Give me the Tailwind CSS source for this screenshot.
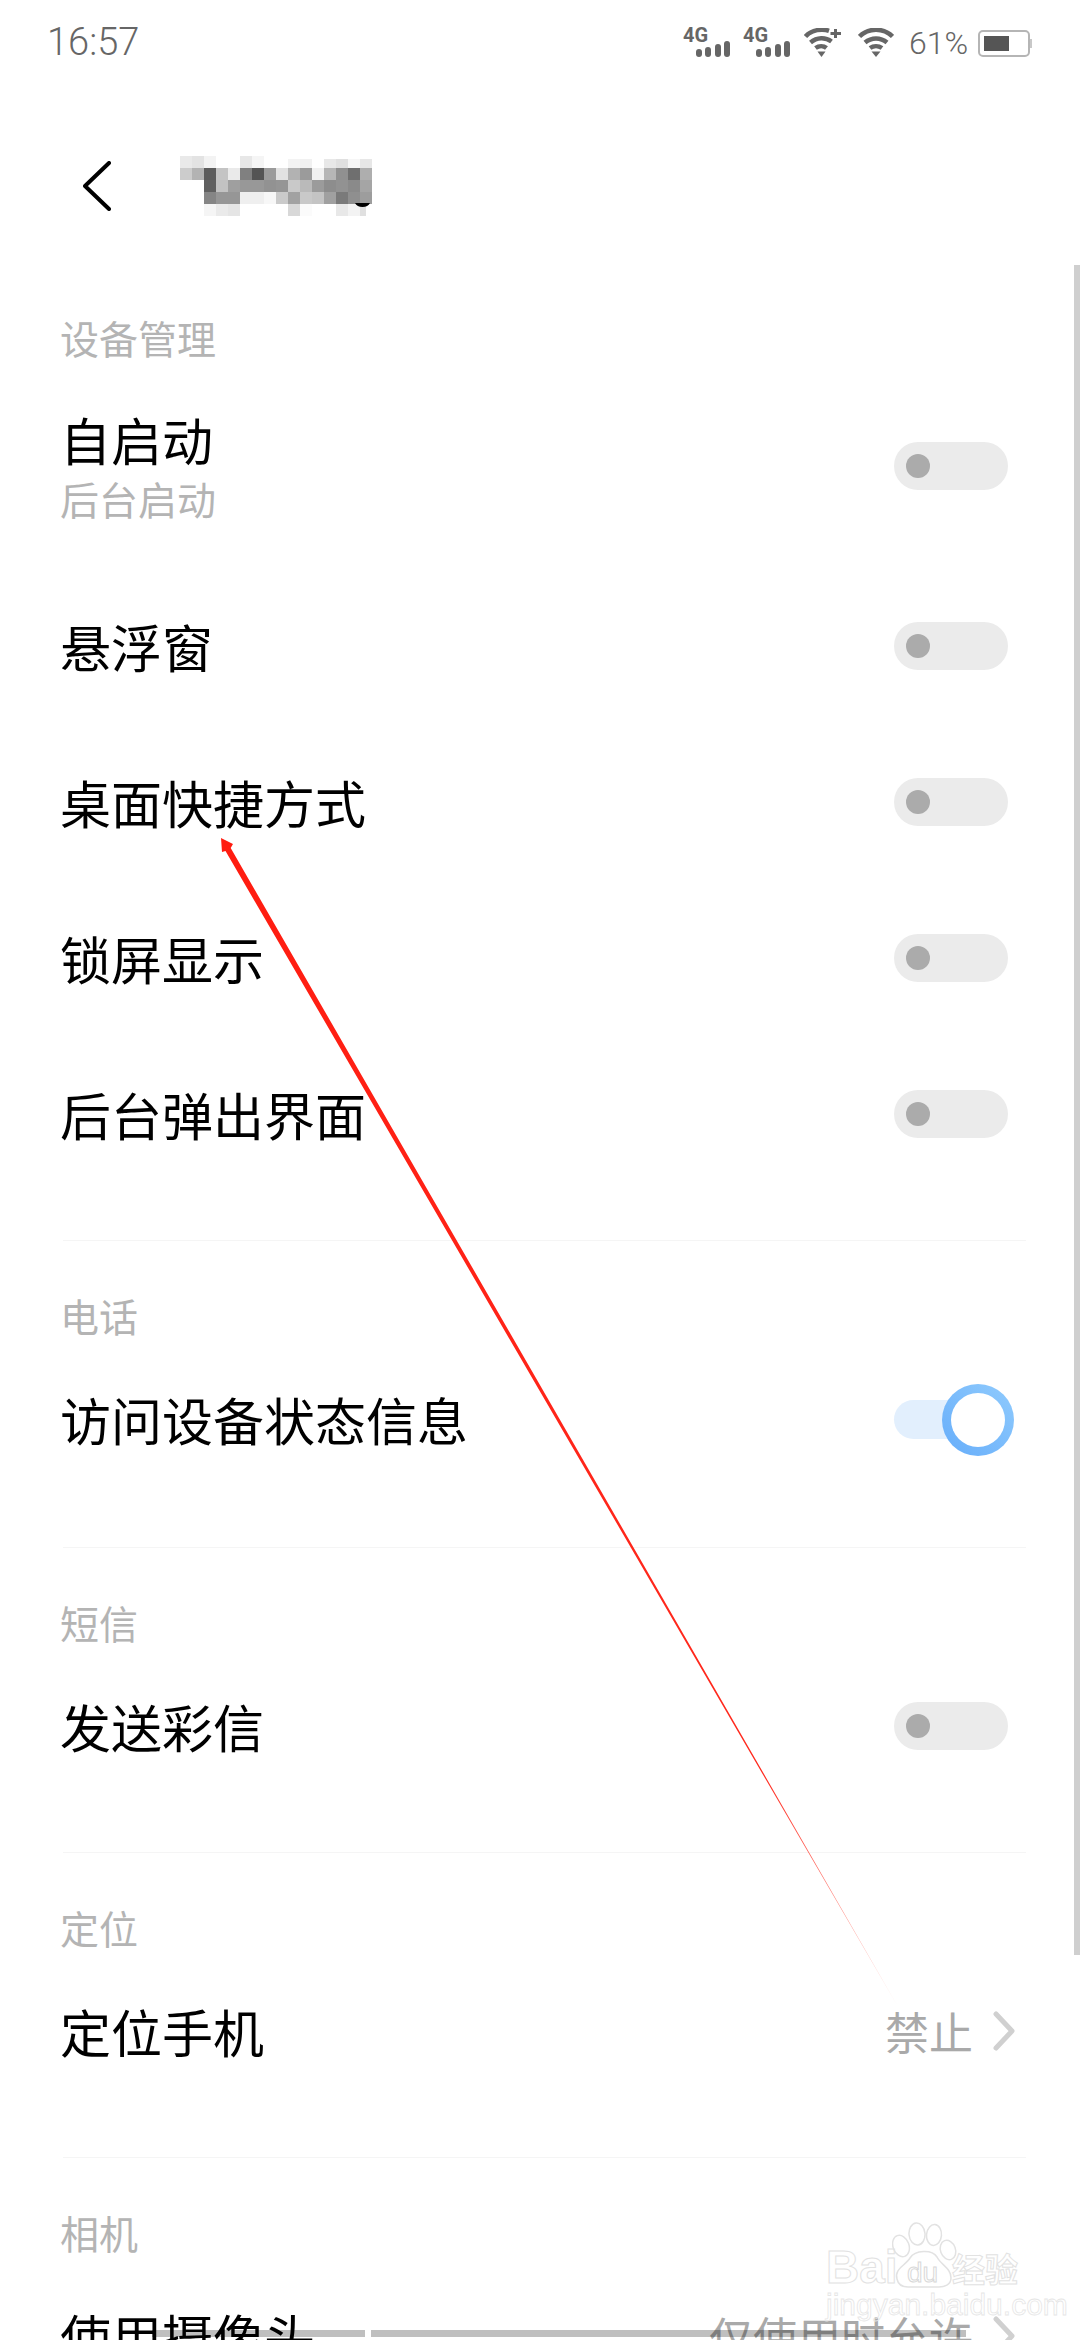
<!DOCTYPE html>
<html lang="zh-CN">
<head>
  <meta charset="UTF-8">
  <meta name="viewport" content="width=device-width, initial-scale=1.0">
  <title>权限管理</title>
  <script src="https://cdn.jsdelivr.net/npm/@tailwindcss/browser@4"></script>
</head>
<body class="bg-white">
  <div class="relative w-[1080px] h-[2340px] overflow-hidden bg-white text-black font-['Noto_Sans_CJK_SC','Noto_Sans',sans-serif]">

    <!-- status bar -->
    <div class="flex items-start justify-between h-[84px] pl-[47px] pr-[48px] pt-[18px] text-[#666666]">
      <span class="text-[38px] leading-[48px] font-light font-['Roboto',sans-serif]">16:57</span>
      <div class="flex items-start pt-[10px]">
        <svg class="w-[48px] h-[30px] overflow-visible" viewBox="0 0 48 30" fill="#666666">
          <text x="-1" y="13.5" font-family="Roboto, sans-serif" font-weight="700" font-size="20">4G</text>
          <rect x="12" y="21" width="6" height="8" rx="3"/><rect x="21" y="19" width="6" height="10" rx="3"/><rect x="31" y="16" width="6" height="13" rx="3"/><rect x="40" y="13" width="6" height="16" rx="3"/>
        </svg>
        <svg class="w-[48px] h-[30px] ml-[12px] overflow-visible" viewBox="0 0 48 30" fill="#666666">
          <text x="-1" y="13.5" font-family="Roboto, sans-serif" font-weight="700" font-size="20">4G</text>
          <rect x="12" y="21" width="6" height="8" rx="3"/><rect x="21" y="19" width="6" height="10" rx="3"/><rect x="31" y="16" width="6" height="13" rx="3"/><rect x="40" y="13" width="6" height="16" rx="3"/>
        </svg>
        <svg class="w-[38px] h-[30px] ml-[12px]" viewBox="0 0 38 30" fill="none" stroke="#666666" stroke-width="4.5">
          <path d="M1.5 8.5C6 3.5 12 1.800 18 1.800c2.500 0 5 .3 7 1"/>
          <path d="M6.500 14.500c6.500-5.500 15-5.500 21-1"/>
          <path d="M11.500 20c3.500-2.500 8-2.500 11 0"/>
          <path d="M13.500 23.500h8L17.500 29z" fill="#666666" stroke="none"/>
          <path d="M31.500 1v9M26.500 5.500h10.500" stroke-width="3"/>
        </svg>
        <svg class="w-[36px] h-[30px] ml-[16px]" viewBox="0 0 36 30" fill="none" stroke="#666666" stroke-width="4.5">
          <path d="M1.500 8.500C10.500 -0.500 25.500 -0.500 34.500 8.500"/>
          <path d="M7 14.500c6.500-5.500 15.500-5.500 22 0"/>
          <path d="M12 20c3.500-2.500 8.500-2.500 12 0"/>
          <path d="M13.500 23.500h9L18 29z" fill="#666666" stroke="none"/>
        </svg>
        <span class="ml-[15px] mt-[-3px] w-[60px] text-[32px] leading-[36px] font-light font-['Roboto',sans-serif]">61%</span>
        <div class="ml-[9px] flex items-center">
          <div class="w-[52px] h-[27px] mt-[2px] p-[4px] rounded-[5px] border-[2px] border-[#b5b5b5]">
            <div class="w-[25px] h-full bg-[#555555]"></div>
          </div>
          <div class="w-[2px] h-[9px] mt-[2px] bg-[#c8c8c8]"></div>
        </div>
      </div>
    </div>

    <!-- header -->
    <div class="flex items-center h-[204px] pl-[83px]">
      <svg class="w-[28px] h-[50px]" viewBox="0 0 28 50" fill="none" stroke="#000000" stroke-width="4" stroke-linecap="round" stroke-linejoin="round">
        <path d="M26 2 2 25l24 23" />
      </svg>
      <!-- pixelated title -->
      <svg class="ml-[69px] w-[192px] h-[60px]" viewBox="0 0 192 60" shape-rendering="crispEdges">
        <g>
          <rect x="0" y="0" width="12" height="12" fill="#e9e9e9"/><rect x="12" y="0" width="12" height="12" fill="#e3e3e3"/><rect x="24" y="0" width="12" height="12" fill="#f3f3f3"/><rect x="60" y="0" width="12" height="12" fill="#e7e7e7"/><rect x="72" y="0" width="12" height="12" fill="#f5f5f5"/><rect x="108" y="3" width="12" height="9" fill="#f3f3f3"/><rect x="120" y="3" width="12" height="9" fill="#f1f1f1"/><rect x="144" y="3" width="12" height="9" fill="#e8e8e8"/><rect x="156" y="3" width="12" height="9" fill="#e0e0e0"/><rect x="168" y="3" width="12" height="9" fill="#f6f6f6"/><rect x="180" y="3" width="12" height="9" fill="#e7e7e7"/>
          <rect x="0" y="12" width="12" height="12" fill="#cccccc"/><rect x="12" y="12" width="12" height="12" fill="#b3b3b3"/><rect x="24" y="12" width="12" height="12" fill="#5c5c5c"/><rect x="36" y="12" width="12" height="12" fill="#c4c4c4"/><rect x="48" y="12" width="12" height="12" fill="#eaeaea"/><rect x="60" y="12" width="12" height="12" fill="#808080"/><rect x="72" y="12" width="12" height="12" fill="#545454"/><rect x="84" y="12" width="12" height="12" fill="#9b9b9b"/><rect x="96" y="12" width="12" height="12" fill="#e2e2e2"/><rect x="108" y="12" width="12" height="12" fill="#b2b2b2"/><rect x="120" y="12" width="12" height="12" fill="#9b9b9b"/><rect x="132" y="12" width="12" height="12" fill="#f1f1f1"/><rect x="144" y="12" width="12" height="12" fill="#b6b6b6"/><rect x="156" y="12" width="12" height="12" fill="#909090"/><rect x="168" y="12" width="12" height="12" fill="#6f6f6f"/><rect x="180" y="12" width="12" height="12" fill="#aeaeae"/>
          <rect x="24" y="24" width="12" height="12" fill="#606060"/><rect x="36" y="24" width="12" height="12" fill="#c2c2c2"/><rect x="48" y="24" width="12" height="12" fill="#9f9f9f"/><rect x="60" y="24" width="12" height="12" fill="#989898"/><rect x="72" y="24" width="12" height="12" fill="#989898"/><rect x="84" y="24" width="12" height="12" fill="#929292"/><rect x="96" y="24" width="12" height="12" fill="#959595"/><rect x="108" y="24" width="12" height="12" fill="#c9c9c9"/><rect x="120" y="24" width="12" height="12" fill="#bababa"/><rect x="132" y="24" width="12" height="12" fill="#9b9b9b"/><rect x="144" y="24" width="12" height="12" fill="#8d8d8d"/><rect x="156" y="24" width="12" height="12" fill="#929292"/><rect x="168" y="24" width="12" height="12" fill="#8a8a8a"/><rect x="180" y="24" width="12" height="12" fill="#a5a5a5"/>
          <rect x="24" y="36" width="12" height="12" fill="#858585"/><rect x="36" y="36" width="12" height="12" fill="#969696"/><rect x="48" y="36" width="12" height="12" fill="#969696"/><rect x="60" y="36" width="12" height="12" fill="#efefef"/><rect x="72" y="36" width="12" height="12" fill="#efefef"/><rect x="84" y="36" width="12" height="12" fill="#f7f7f7"/><rect x="96" y="36" width="12" height="12" fill="#cacaca"/><rect x="108" y="36" width="12" height="12" fill="#a2a2a2"/><rect x="120" y="36" width="12" height="12" fill="#c9c9c9"/><rect x="132" y="36" width="12" height="12" fill="#c4c4c4"/><rect x="144" y="36" width="12" height="12" fill="#a0a0a0"/><rect x="156" y="36" width="12" height="12" fill="#7a7a7a"/><rect x="168" y="36" width="12" height="12" fill="#8f8f8f"/><rect x="180" y="36" width="12" height="12" fill="#9d9d9d"/>
          <rect x="24" y="48" width="12" height="12" fill="#f5f5f5"/><rect x="36" y="48" width="12" height="12" fill="#eaeaea"/><rect x="48" y="48" width="12" height="12" fill="#e5e5e5"/><rect x="108" y="48" width="12" height="12" fill="#d8d8d8"/><rect x="120" y="48" width="12" height="12" fill="#fbfbfb"/><rect x="156" y="48" width="12" height="12" fill="#e8e8e8"/><rect x="168" y="48" width="12" height="12" fill="#f3f3f3"/><rect x="180" y="48" width="6" height="12" fill="#e0e0e0"/>
        </g>
        <path d="M175 47h15q-2 4-7.500 4T175 47z" fill="#000000" shape-rendering="auto"/>
      </svg>
    </div>

    <!-- 设备管理 -->
    <section class="ml-[60px] mr-[54px]">
      <p class="h-[104px] pt-[21px] text-[39px] leading-[56px] text-[#b4b4b4]">设备管理</p>
      <div class="flex items-start justify-between h-[176px]">
        <div class="pt-[17px]">
          <p class="text-[51px] leading-[60px]">自启动</p>
          <p class="text-[39px] leading-[58px] text-[#b4b4b4]">后台启动</p>
        </div>
        <div class="mt-[50px] mr-[18px] flex items-center w-[114px] h-[48px] pl-[12px] rounded-full bg-[#ebebeb]">
          <div class="w-[24px] h-[24px] rounded-full bg-[#ababab]"></div>
        </div>
      </div>
      <div class="flex items-center justify-between h-[156px]">
        <p class="text-[51px] leading-[60px]">悬浮窗</p>
        <div class="mr-[18px] flex items-center w-[114px] h-[48px] pl-[12px] rounded-full bg-[#ebebeb]">
          <div class="w-[24px] h-[24px] rounded-full bg-[#ababab]"></div>
        </div>
      </div>
      <div class="flex items-center justify-between h-[156px]">
        <p class="text-[51px] leading-[60px]">桌面快捷方式</p>
        <div class="mr-[18px] flex items-center w-[114px] h-[48px] pl-[12px] rounded-full bg-[#ebebeb]">
          <div class="w-[24px] h-[24px] rounded-full bg-[#ababab]"></div>
        </div>
      </div>
      <div class="flex items-center justify-between h-[156px]">
        <p class="text-[51px] leading-[60px]">锁屏显示</p>
        <div class="mr-[18px] flex items-center w-[114px] h-[48px] pl-[12px] rounded-full bg-[#ebebeb]">
          <div class="w-[24px] h-[24px] rounded-full bg-[#ababab]"></div>
        </div>
      </div>
      <div class="flex items-center justify-between h-[156px]">
        <p class="text-[51px] leading-[60px]">后台弹出界面</p>
        <div class="mr-[18px] flex items-center w-[114px] h-[48px] pl-[12px] rounded-full bg-[#ebebeb]">
          <div class="w-[24px] h-[24px] rounded-full bg-[#ababab]"></div>
        </div>
      </div>
    </section>

    <!-- 电话 -->
    <section class="ml-[60px] mr-[54px] mt-[48px] pb-[50px]">
      <div class="ml-[3px] h-px bg-[#f5f5f5]"></div>
      <p class="h-[100px] pt-[46px] text-[39px] leading-[56px] text-[#b4b4b4]">电话</p>
      <div class="flex items-center justify-between h-[156px]">
        <p class="text-[51px] leading-[60px]">访问设备状态信息</p>
        <div class="relative mr-[18px] w-[114px] h-[39px] rounded-full bg-[#e2effd]">
          <div class="absolute right-[-6px] top-[-16px] flex items-center justify-center w-[72px] h-[72px] rounded-full bg-linear-to-bl from-[#90cbfd] to-[#66adfa]">
            <div class="w-[54px] h-[54px] rounded-full bg-white"></div>
          </div>
        </div>
      </div>
    </section>

    <!-- 短信 -->
    <section class="ml-[60px] mr-[54px] pb-[48px]">
      <div class="ml-[3px] h-px bg-[#f5f5f5]"></div>
      <p class="h-[100px] pt-[46px] text-[39px] leading-[56px] text-[#b4b4b4]">短信</p>
      <div class="flex items-center justify-between h-[156px]">
        <p class="text-[51px] leading-[60px]">发送彩信</p>
        <div class="mr-[18px] flex items-center w-[114px] h-[48px] pl-[12px] rounded-full bg-[#ebebeb]">
          <div class="w-[24px] h-[24px] rounded-full bg-[#ababab]"></div>
        </div>
      </div>
    </section>

    <!-- 定位 -->
    <section class="ml-[60px] mr-[54px] pb-[48px]">
      <div class="ml-[3px] h-px bg-[#f5f5f5]"></div>
      <p class="h-[100px] pt-[46px] text-[39px] leading-[56px] text-[#b4b4b4]">定位</p>
      <div class="flex items-center justify-between h-[156px]">
        <p class="text-[51px] leading-[60px]">定位手机</p>
        <div class="flex items-center mr-[11px]">
          <span class="text-[44px] leading-[60px] text-[#a9a9a9]">禁止</span>
          <svg class="ml-[20px] w-[22px] h-[40px]" viewBox="0 0 22 40" fill="none" stroke="#d0d0d0" stroke-width="5" stroke-linecap="round" stroke-linejoin="round"><path d="M3 3l16 17L3 37"/></svg>
        </div>
      </div>
    </section>

    <!-- 相机 -->
    <section class="ml-[60px] mr-[54px]">
      <div class="ml-[3px] h-px bg-[#f5f5f5]"></div>
      <p class="h-[100px] pt-[46px] text-[39px] leading-[56px] text-[#b4b4b4]">相机</p>
      <div class="flex items-center justify-between h-[156px]">
        <p class="text-[51px] leading-[60px]">使用摄像头</p>
        <div class="flex items-center mr-[11px]">
          <span class="text-[44px] leading-[60px] text-[#a9a9a9]">仅使用时允许</span>
          <svg class="ml-[20px] w-[22px] h-[40px]" viewBox="0 0 22 40" fill="none" stroke="#d0d0d0" stroke-width="5" stroke-linecap="round" stroke-linejoin="round"><path d="M3 3l16 17L3 37"/></svg>
        </div>
      </div>
    </section>

    <!-- scrollbars -->
    <div class="absolute right-0 top-[265px] w-[6px] h-[1690px] bg-[#cfcfcf]"></div>
    <div class="absolute left-[152px] top-[2330px] w-[213px] h-[7px] bg-black/25"></div>
    <div class="absolute left-[371px] top-[2330px] w-[595px] h-[7px] bg-black/25"></div>

    <!-- watermark -->
    <div class="absolute left-[826px] top-[2222px] w-[200px] h-[100px] font-['Liberation_Sans',sans-serif] text-transparent [-webkit-text-stroke:1px_#e2e2e2]">
      <span class="absolute left-0 top-[20px] text-[46px] leading-[50px] font-bold">Bai</span>
      <span class="absolute left-[81px] top-[36px] text-[28px] leading-[30px] [-webkit-text-stroke:1px_#d8d8d8]">du</span>
      <span class="absolute left-[126px] top-[26px] text-[33px] leading-[40px] font-['Noto_Sans_CJK_SC',sans-serif] font-bold">经验</span>
      <span class="absolute left-0 top-[66px] text-[30px] leading-[34px] font-normal [-webkit-text-stroke:0.8px_#e6e6e6]">jingyan.baidu.com</span>
      <svg class="absolute left-[66px] top-0 w-[66px] h-[66px]" viewBox="0 0 66 66" fill="none" stroke="#e2e2e2" stroke-width="1.500">
        <ellipse cx="9" cy="24" rx="8" ry="11" transform="rotate(-20 9 24)"/>
        <ellipse cx="25" cy="12" rx="8" ry="11" transform="rotate(-5 25 12)"/>
        <ellipse cx="42" cy="13" rx="7.500" ry="10.500" transform="rotate(5 42 13)"/>
        <ellipse cx="56" cy="28" rx="7.500" ry="10" transform="rotate(-20 56 28)"/>
        <path d="M5 57c-3-10 8-13 13-21 5-8 22-9 27-1 4 8 14 11 14 21 0 7-7 9-12 9H16C10 65 6 62 5 57z"/>
      </svg>
    </div>

    <!-- annotation arrow -->
    <svg class="absolute left-0 top-0 w-[1080px] h-[2340px] pointer-events-none" viewBox="0 0 1080 2340">
      <defs>
        <linearGradient id="arrowFade" gradientUnits="userSpaceOnUse" x1="221" y1="838" x2="897" y2="2005">
          <stop offset="0" stop-color="#ff1c10"/>
          <stop offset="0.8" stop-color="#ff2a1e"/>
          <stop offset="1" stop-color="#ffd0ca"/>
        </linearGradient>
      </defs>
      <path d="M221 838 233 844 230.700 848 897 2005 225.500 851 222 852z" fill="url(#arrowFade)"/>
    </svg>
  </div>
</body>
</html>
